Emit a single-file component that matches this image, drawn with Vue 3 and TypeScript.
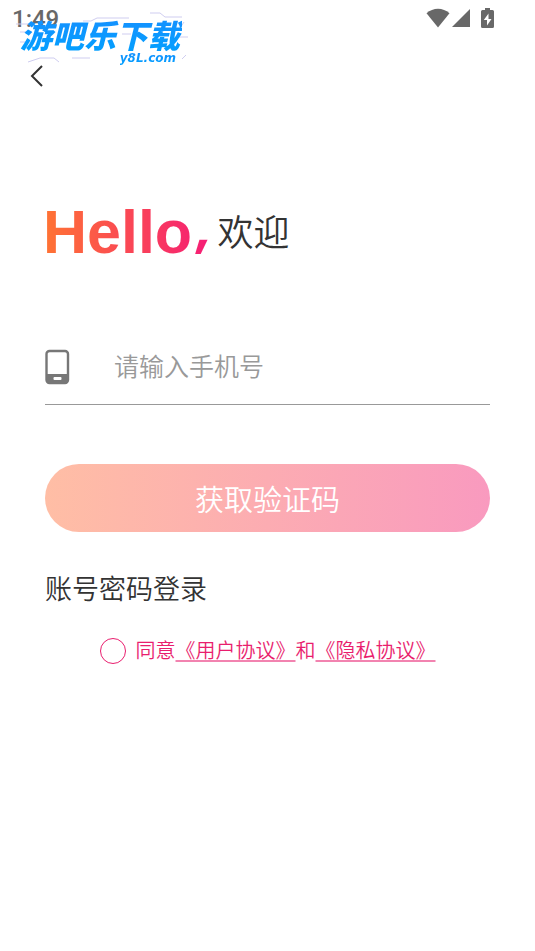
<script setup lang="ts">
import { ref } from 'vue'

const phone = ref('')
const agreed = ref(false)
</script>

<template>
  <div class="page">
    <header class="status">
      <span class="clock">1:49</span>
      <span class="indicators">
        <svg width="24" height="20" viewBox="0 0 24 20" aria-hidden="true">
          <path d="M0.5 5.2C7-.9 17-.9 23.500 5.200L12 19.500Z" fill="#686868" />
        </svg>
        <svg width="20" height="20" viewBox="0 0 20 20" aria-hidden="true">
          <path d="M19 1v18H1Z" fill="#686868" />
        </svg>
        <svg class="battery" width="13" height="21" viewBox="0 0 13 21" aria-hidden="true">
          <path d="M4 0h5v2h2.500q1.500 0 1.500 1.500v15q0 1.500-1.500 1.500h-10Q0 20 0 18.500v-15Q0 2 1.500 2H4Z" fill="#686868" />
          <path d="M7.500 5.500 2.800 12H6v5.500L10.500 11H7.500Z" fill="#fff" />
        </svg>
      </span>
    </header>

    <div class="brand">
      <svg class="circuit" width="190" height="62" viewBox="0 0 190 62" fill="none" stroke="#cfcdf0" aria-hidden="true">
        <path d="M73 13h8l6-3h32M140 5h10l5 4h17M6 16h17M10 24h12M10 34h12M18 54l12-4h14l5 4M62 50h18M172 51l4-4M170 20l4-6M112 26h9M168 29h10" />
      </svg>
      <span class="brand-name">游吧乐下载</span>
      <span class="brand-site">y8L.com</span>
    </div>

    <nav class="nav">
      <button class="back" type="button" aria-label="返回">
        <svg width="14" height="24" viewBox="0 0 14 24" fill="none" aria-hidden="true">
          <path d="M12 2 2 12 12 22" stroke="#333" stroke-width="2" />
        </svg>
      </button>
    </nav>

    <main class="content">
      <h1 class="greeting">
        <span class="hello">Hello<span class="comma">,</span></span>
        <span class="welcome">欢迎</span>
      </h1>

      <form class="form" @submit.prevent>
        <div class="field">
          <label for="phone" aria-label="手机号">
            <svg width="25" height="36" viewBox="0 0 25 36" aria-hidden="true">
              <rect x="1.500" y="2" width="21.500" height="32" rx="3" fill="#fff" stroke="#777" stroke-width="2.400" />
              <path d="M1.500 25H23v6q0 3-3 3H4.500q-3 0-3-3Z" fill="#777" />
              <rect x="8.500" y="28" width="8" height="3" rx="1" fill="#fff" />
            </svg>
          </label>
          <input id="phone" v-model="phone" type="tel" placeholder="请输入手机号" />
        </div>
        <button class="submit" type="submit">获取验证码</button>
        <a class="password" href="#password">账号密码登录</a>
        <div class="agreement">
          <input id="agree" v-model="agreed" type="checkbox" />
          <p><label for="agree">同意</label><a href="#terms">《用户协议》</a>和<a href="#privacy">《隐私协议》</a></p>
        </div>
      </form>
    </main>
  </div>
</template>

<style>
body {
  background: #fff;
}
</style>

<style scoped>
.page {
  position: relative;
  overflow: hidden;
  min-height: 100vh;
  box-sizing: border-box;
  color: #333;
  font-family: Roboto, "Noto Sans CJK SC", sans-serif;
  font-weight: 350;
}

button,
input {
  font-family: inherit;
  font-weight: inherit;
}

.status {
  display: flex;
  align-items: center;
  justify-content: space-between;
  height: 36px;
  padding: 0 41px 0 12px;
}

.clock {
  padding-top: 2px;
  color: #686868;
  font-size: 24px;
  font-weight: 500;
  line-height: 36px;
}

.indicators {
  display: flex;
  align-items: center;
  gap: 1px;
}

.battery {
  margin-left: 9px;
}

.brand {
  position: absolute;
  top: 8px;
  left: 10px;
  display: flex;
  flex-direction: column;
  width: 172px;
  font-style: italic;
  font-weight: 700;
}

.circuit {
  position: absolute;
  top: 0;
  left: 0;
}

.brand-name,
.brand-site {
  position: relative;
  color: transparent;
  background: linear-gradient(#1a8cff, #00a2ff);
  background-clip: text;
}

.brand-name {
  padding: 8px 0 0 10px;
  font-size: 32px;
  font-weight: 900;
  line-height: 42px;
  white-space: nowrap;
}

.brand-site {
  align-self: flex-end;
  margin-top: -8px;
  padding-right: 6px;
  font-family: "DejaVu Sans", sans-serif;
  font-size: 12px;
  line-height: 16px;
}

.nav {
  display: flex;
  padding: 24px 26px 0;
}

.back {
  display: flex;
  padding: 4px;
  border: 0;
  background: none;
}

.content {
  padding: 100px 45px 0;
}

.greeting {
  display: flex;
  align-items: center;
  gap: 5px;
  margin: 0 0 0 -2px;
  font-weight: inherit;
}

.hello {
  color: transparent;
  background: linear-gradient(90deg, #ff7433, #f51b77);
  background-clip: text;
  font-family: "Liberation Sans", sans-serif;
  font-size: 61px;
  font-weight: 700;
  line-height: 80px;
}

.comma {
  margin-left: 4px;
  font-family: Inter, sans-serif;
  font-size: 44px;
  font-style: italic;
  font-weight: 900;
  line-height: 1;
  vertical-align: 8px;
}

.welcome {
  padding-top: 4px;
  font-size: 36px;
  line-height: 76px;
}

.field {
  display: flex;
  align-items: center;
  gap: 44px;
  height: 75px;
  margin-top: 55px;
  padding-top: 2px;
  border-bottom: 1px solid #999;
}

.field label {
  display: flex;
}

.field input {
  flex: 1;
  min-width: 0;
  padding: 2px 0 0;
  border: 0;
  outline: 0;
  color: #333;
  background: none;
  font-size: 25px;
  line-height: 40px;
}

.field input::placeholder {
  color: #999;
  opacity: 1;
}

.submit {
  display: block;
  width: 100%;
  height: 68px;
  margin-top: 59px;
  padding: 0;
  border: 0;
  border-radius: 34px;
  color: #fff;
  background: linear-gradient(90deg, #ffbea5, #f99abf);
  font-size: 29px;
}

.password {
  display: inline-block;
  margin-top: 38px;
  color: #333;
  font-size: 27px;
  line-height: 40px;
  text-decoration: none;
}

.agreement {
  display: flex;
  align-items: center;
  justify-content: center;
  gap: 10px;
  margin-top: 23px;
  color: #e91e6e;
  font-size: 20px;
  line-height: 36px;
}

.agreement input {
  flex: none;
  appearance: none;
  width: 26px;
  height: 26px;
  margin: 0;
  border: 1px solid #e91e6e;
  border-radius: 50%;
}

.agreement input:checked {
  background: #e91e6e;
}

.agreement p {
  margin: 0;
}

.agreement a {
  color: inherit;
  text-decoration-color: #f283b0;
  text-decoration-thickness: 2px;
  text-underline-offset: 2px;
}
</style>
